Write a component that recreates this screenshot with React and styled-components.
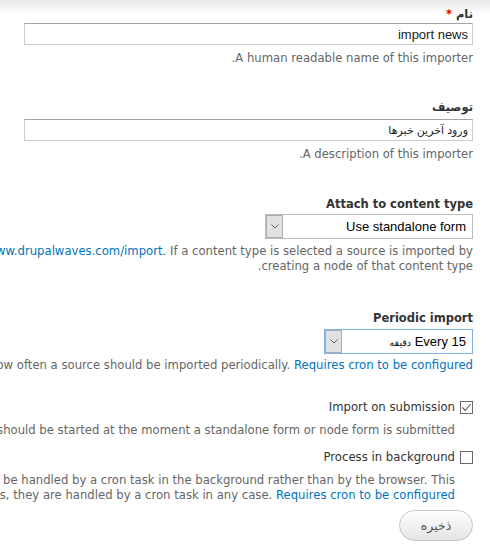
import React from 'react'
import styled, {createGlobalStyle} from 'styled-components'

const GlobalStyle = createGlobalStyle`
    html, body {
        margin: 0;
        padding: 0;
        background: #fff;
        overflow: hidden;
    }
`

const Page = styled.div`
    width: 490px;
    height: 550px;
    overflow: hidden;
    direction: rtl;
    background: linear-gradient(#e8e8e8, #fff 14px);
    font-family: "DejaVu Sans", Verdana, sans-serif;
`

// the form is much wider than the window, rtl makes it hang off the left side
const Form = styled.form`
    width: 1200px;
    box-sizing: border-box;
    padding: 7px 17px 0 0;
`

const Field = styled.div`
    margin-top: ${p => p.$gap || 0}px;
`

const Label = styled.label`
    display: block;
    font-size: 11.5px;
    font-weight: bold;
    line-height: 15px;
    color: #333;
    margin-bottom: ${p => p.$space ?? 1}px;
`

const Required = styled.span`
    color: #e00;
`

const TextInput = styled.input`
    display: block;
    width: 449px;
    height: 22px;
    box-sizing: border-box;
    margin: 0;
    padding: 0 4px;
    border: 1px solid #ccc;
    border-top-color: #a4a4a4;
    font-family: "Liberation Sans", "DejaVu Sans", sans-serif;
    font-size: ${p => p.$fa ? '11px' : '13px'};
    color: #222;
    direction: rtl;
    outline: none;
`

const Description = styled.div`
    font-size: 11.65px;
    line-height: 15px;
    color: #666;
    margin-top: ${p => p.$gap ?? 6}px;
    margin-right: ${p => p.$indent || 0}px;
`

const Link = styled.a`
    color: #0074bd;
    text-decoration: none;
`

const SelectBox = styled.div`
    display: flex;
    width: ${p => p.$width}px;
    height: 25px;
    box-sizing: border-box;
    border: 1px solid ${p => p.$focused ? '#7eb4ea' : '#bdbdbd'};
    background: #fff;
`

const SelectValue = styled.div`
    flex: 1;
    padding-right: 6px;
    font-family: "Liberation Sans", "DejaVu Sans", sans-serif;
    font-size: 13px;
    line-height: 23px;
    color: #000;
`

const Unit = styled.span`
    font-family: "DejaVu Sans", sans-serif;
    font-size: 9.5px;
`

const SelectArrow = styled.div`
    width: 17px;
    box-sizing: border-box;
    border: 1px solid #adadad;
    background: #e1e1e1;
    display: flex;
    align-items: center;
    justify-content: center;
`

const CheckRow = styled.label`
    display: flex;
    align-items: center;
    gap: 5px;
    font-size: 11.7px;
    line-height: 15px;
    color: #333;
`

const CheckBox = styled.span`
    width: 13px;
    height: 13px;
    box-sizing: border-box;
    border: 1px solid #6a6a6a;
    background: #fff;
    display: flex;
    align-items: center;
    justify-content: center;
`

const Actions = styled.div`
    margin-top: 7px;
`

const SaveButton = styled.button`
    width: 74px;
    height: 31px;
    border: 1px solid #c6c6c6;
    border-radius: 16px;
    background: linear-gradient(#fefefe, #e4e4e4);
    color: #555;
    font-family: "DejaVu Sans", sans-serif;
    font-size: 12.5px;
    padding: 0;
`

function Select({width, focused, children}){
    return(
        <SelectBox $width={width} $focused={focused}>
            <SelectValue>{children}</SelectValue>
            <SelectArrow>
                <svg width="8" height="5" viewBox="0 0 8 5">
                    <path d="M0.5 0.5 L4 4 L7.5 0.5" fill="none" stroke="#606060" strokeWidth="1"/>
                </svg>
            </SelectArrow>
        </SelectBox>
    )
}

function Check({checked, children}){
    return(
        <CheckRow>
            <CheckBox>
                {checked && (
                    <svg width="11" height="11" viewBox="0 0 11 11">
                        <path d="M1.5 5.5 L4.3 8.5 L9.7 2" fill="none" stroke="#555" strokeWidth="1.1"/>
                    </svg>
                )}
            </CheckBox>
            {children}
        </CheckRow>
    )
}

export default function App(){
    return(<>
        <GlobalStyle/>
        <Page>
            <Form onSubmit={e => e.preventDefault()}>
                <Field>
                    <Label>نام <Required>*</Required></Label>
                    <TextInput type='text' value='import news' readOnly />
                    <Description>A human readable name of this importer.</Description>
                </Field>
                <Field $gap={34}>
                    <Label $space={4}>توصیف</Label>
                    <TextInput $fa type='text' value='ورود آخرین خبرها' readOnly />
                    <Description>A description of this importer.</Description>
                </Field>
                <Field $gap={35}>
                    <Label $space={2}>Attach to content type</Label>
                    <Select width={208}>Use standalone form</Select>
                    <Description $gap={5}>
                        If "Use standalone form" is selected a source is imported by submitting a form at <Link href='#'>http://www.drupalwaves.com/import</Link>. If a content type is selected a source is imported by<br/>
                        creating a node of that content type.
                    </Description>
                </Field>
                <Field $gap={37}>
                    <Label $space={3}>Periodic import</Label>
                    <Select width={149} focused>Every 15 <Unit>دقیقه</Unit></Select>
                    <Description $gap={4}>
                        Choose how often a source should be imported periodically. <Link href='#'>Requires cron to be configured</Link>.
                    </Description>
                </Field>
                <Field $gap={27}>
                    <Check checked>Import on submission</Check>
                    <Description $gap={8} $indent={18}>
                        Check if import should be started at the moment a standalone form or node form is submitted.
                    </Description>
                </Field>
                <Field $gap={12}>
                    <Check>Process in background</Check>
                    <Description $gap={8} $indent={18}>
                        For very large imports. If checked, import and delete tasks started from the web UI will be handled by a cron task in the background rather than by the browser. This<br/>
                        does not apply to periodic imports, they are handled by a cron task in any case. <Link href='#'>Requires cron to be configured</Link>.
                    </Description>
                </Field>
                <Actions>
                    <SaveButton type='submit'>ذخیره</SaveButton>
                </Actions>
            </Form>
        </Page>
    </>)
}
